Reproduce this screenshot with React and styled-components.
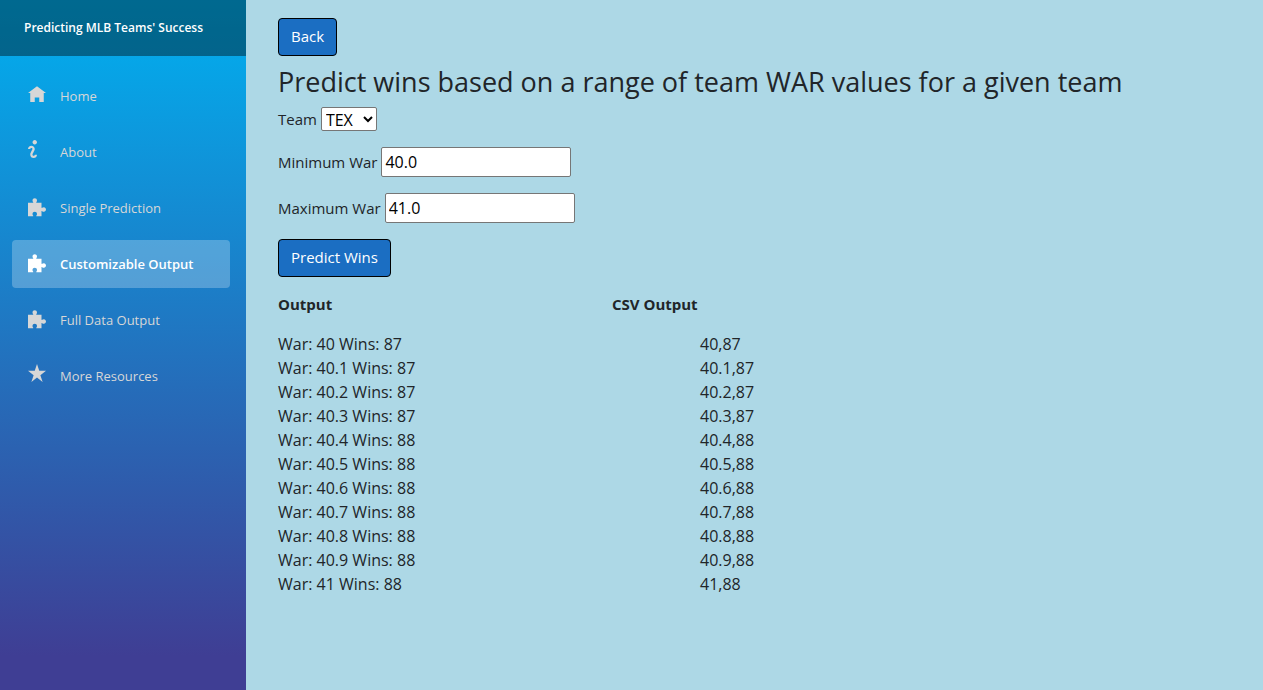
import React from "react";
import styled, { createGlobalStyle } from "styled-components";

const GlobalStyle = createGlobalStyle`
  *, *::before, *::after { box-sizing: border-box; }
  body {
    margin: 0;
    background: #add8e6;
    color: #212529;
    font-family: "Trebuchet MS", "Open Sans", "Liberation Sans", sans-serif;
    font-size: 15px;
    line-height: 24px;
  }
`;

const Page = styled.div`
  display: flex;
  min-height: 100vh;
`;

const Sidebar = styled.aside`
  flex: 0 0 246px;
  background: linear-gradient(180deg, #00b0f0 0%, #3f3e94 95%);
`;

const Brand = styled.header`
  display: flex;
  align-items: center;
  height: 56px;
  padding: 0 24px;
  background: rgba(0, 0, 0, 0.4);
`;

const BrandLink = styled.a`
  color: #fff;
  font-size: 12px;
  font-weight: 600;
  text-decoration: none;
  white-space: nowrap;
`;

const Nav = styled.nav`
  padding: 16px 16px 16px 12px;
`;

const NavList = styled.ul`
  display: flex;
  flex-direction: column;
  gap: 8px;
  margin: 0;
  padding: 0;
  list-style: none;
`;

const NavLink = styled.a`
  display: flex;
  height: 48px;
  padding: 0 16px;
  gap: 14px;
  border-radius: 4px;
  background: ${(p) => (p.$active ? "rgba(255, 255, 255, 0.25)" : "transparent")};
  color: ${(p) => (p.$active ? "#fff" : "#d7d7d7")};
  font-size: 13px;
  font-weight: ${(p) => (p.$active ? 600 : 500)};
  line-height: 48px;
  text-decoration: none;
  white-space: nowrap;
`;

const Icon = styled.svg`
  flex: none;
  width: 18px;
  height: 18px;
  margin-top: 12px;
  fill: currentColor;
  overflow: visible;
`;

const Main = styled.main`
  flex: 1;
  min-width: 0;
  padding: 18px 24px 24px 32px;
`;

const Button = styled.button`
  display: block;
  height: 38px;
  padding: 0 12px 2px;
  border: 1px solid #000;
  border-radius: 4px;
  background: #1b6ec2;
  color: #fff;
  font: inherit;
`;

const Title = styled.h3`
  margin: 9px 0 8px;
  font-size: 27px;
  font-weight: 400;
  line-height: 34px;
`;

const Form = styled.form`
  display: flex;
  flex-direction: column;
  align-items: flex-start;
  gap: 16px;
`;

const Field = styled.div`
  display: flex;
  align-items: center;
  gap: 4px;
`;

const Select = styled.select`
  width: 56px;
  height: 24px;
  padding: 0;
  border: 1px solid #767676;
  border-radius: 2px;
  background: #fff;
  color: #000;
  font: inherit;
  font-size: 16px;
`;

const Input = styled.input`
  width: 190px;
  height: 30px;
  padding: 1px 3px;
  border: 1px solid #767676;
  border-radius: 2px;
  background: #fff;
  color: #000;
  font: inherit;
  font-size: 16px;
`;

const Results = styled.table`
  margin-top: 15px;
  border-collapse: collapse;
`;

const HeadCell = styled.th`
  min-width: 334px;
  padding: 0 0 16px;
  font-size: 15px;
  font-weight: 700;
  text-align: left;
`;

const Cell = styled.td`
  padding: 0 0 0 ${(p) => (p.$indent ? "88px" : "0")};
  font-size: 16px;
`;

const icons = {
  home: <path transform="translate(0 1)" d="M4 0l-4 3h1v4h2v-2h2v2h2v-4l1 0-4-3z" />,
  info: (
    <path d="M3 0c-.55 0-1 .45-1 1s.45 1 1 1 1-.45 1-1-.45-1-1-1zm-1.5 2.5c-.83 0-1.5.67-1.5 1.5h1c0-.28.22-.5.5-.5s.5.22.5.5-1 1.64-1 2.5c0 .86.67 1.5 1.5 1.5s1.5-.67 1.5-1.5h-1c0 .28-.22.5-.5.5s-.5-.22-.5-.5c0-.36 1-1.84 1-2.5 0-.81-.67-1.5-1.5-1.5z" />
  ),
  puzzle: (
    <path transform="translate(0 1)" d="M3 0c-.55 0-1 .42-1 .95 0 .3.15.5.27.75.05.1.05.2.05.3h-2.32v6h2.32c0-.1 0-.2-.05-.3-.12-.25-.27-.45-.27-.75 0-.5.45-.9 1-.9s1 .4 1 .9c0 .3-.15.5-.27.75-.05.1-.05.2-.05.3h2.32v-2.32c.1 0 .2 0 .3.05.25.12.45.27.75.27.55 0 .95-.45.95-1s-.4-1-.95-1c-.3 0-.5.15-.75.27-.1.05-.2.05-.3.05v-2.32h-2.32c0-.1 0-.2.05-.3.12-.25.27-.45.27-.75 0-.53-.45-.95-1-.95z" />
  ),
  star: <path d="M4 0l-1 3h-3l2.5 2-1 3 2.5-2 2.5 2-1-3 2.5-2h-3l-1-3z" />,
};

const navItems = [
  { label: "Home", icon: "home" },
  { label: "About", icon: "info" },
  { label: "Single Prediction", icon: "puzzle" },
  { label: "Customizable Output", icon: "puzzle", active: true },
  { label: "Full Data Output", icon: "puzzle" },
  { label: "More Resources", icon: "star" },
];

const predictions = [
  ["40", 87],
  ["40.1", 87],
  ["40.2", 87],
  ["40.3", 87],
  ["40.4", 88],
  ["40.5", 88],
  ["40.6", 88],
  ["40.7", 88],
  ["40.8", 88],
  ["40.9", 88],
  ["41", 88],
];

export default function App() {
  return (
    <Page>
      <GlobalStyle />
      <Sidebar>
        <Brand>
          <BrandLink href="#">Predicting MLB Teams' Success</BrandLink>
        </Brand>
        <Nav>
          <NavList>
            {navItems.map((item) => (
              <li key={item.label}>
                <NavLink
                  href="#"
                  $active={item.active}
                  aria-current={item.active ? "page" : undefined}
                >
                  <Icon viewBox="0 0 8 8" aria-hidden="true">
                    {icons[item.icon]}
                  </Icon>
                  {item.label}
                </NavLink>
              </li>
            ))}
          </NavList>
        </Nav>
      </Sidebar>
      <Main>
        <Button type="button">Back</Button>
        <Title>Predict wins based on a range of team WAR values for a given team</Title>
        <Form onSubmit={(e) => e.preventDefault()}>
          <Field>
            <label htmlFor="team">Team</label>
            <Select id="team" defaultValue="TEX">
              <option>TEX</option>
            </Select>
          </Field>
          <Field>
            <label htmlFor="min-war">Minimum War</label>
            <Input id="min-war" type="text" defaultValue="40.0" />
          </Field>
          <Field>
            <label htmlFor="max-war">Maximum War</label>
            <Input id="max-war" type="text" defaultValue="41.0" />
          </Field>
          <Button type="submit">Predict Wins</Button>
        </Form>
        <Results>
          <thead>
            <tr>
              <HeadCell scope="col">Output</HeadCell>
              <HeadCell scope="col">CSV Output</HeadCell>
            </tr>
          </thead>
          <tbody>
            {predictions.map(([war, wins]) => (
              <tr key={war}>
                <Cell>{`War: ${war} Wins: ${wins}`}</Cell>
                <Cell $indent>{`${war},${wins}`}</Cell>
              </tr>
            ))}
          </tbody>
        </Results>
      </Main>
    </Page>
  );
}
